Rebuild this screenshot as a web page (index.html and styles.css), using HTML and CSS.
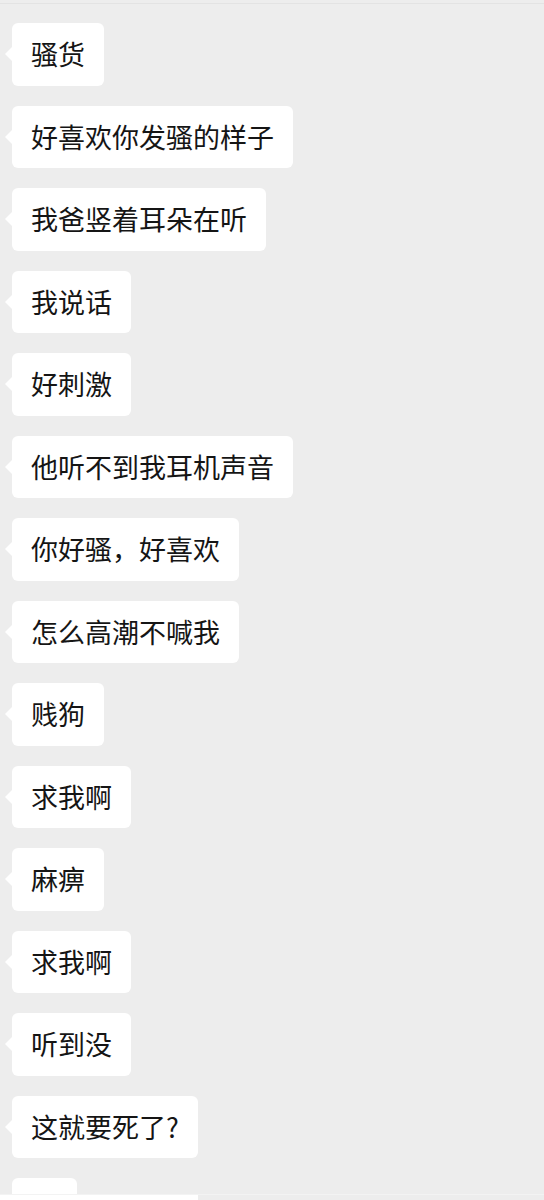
FILE: index.html
```html
<!DOCTYPE html>
<html>
<head>
  <meta charset="utf-8">
  <title>聊天记录</title>
  <link rel="stylesheet" href="styles.css">
</head>
<body>
  <div class="chat">
    <div class="msg">骚货</div>
    <div class="msg">好喜欢你发骚的样子</div>
    <div class="msg">我爸竖着耳朵在听</div>
    <div class="msg">我说话</div>
    <div class="msg">好刺激</div>
    <div class="msg">他听不到我耳机声音</div>
    <div class="msg">你好骚，好喜欢</div>
    <div class="msg">怎么高潮不喊我</div>
    <div class="msg">贱狗</div>
    <div class="msg">求我啊</div>
    <div class="msg">麻痹</div>
    <div class="msg">求我啊</div>
    <div class="msg">听到没</div>
    <div class="msg">这就要死了?</div>
    <div class="msg short"></div>
  </div>
  <!-- next screenshot glued under the first one -->
  <div class="next">
    <div class="next-bubble">这颗糊涂了么</div>
  </div>
</body>
</html>
```

FILE: styles.css
```css
body {
  margin: 0;
  background-color: #ededed;
  font-family: "Noto Sans CJK SC", "Noto Sans", sans-serif;
  height: 1200px;
  overflow: hidden;
}

.chat {
  border-top: 1px solid #e3e3e3;
  margin-top: 3px;
  padding: 19px 0 0 12px;
  display: flex;
  flex-direction: column;
  align-items: flex-start;
  gap: 20px;
  height: 1171px;
  overflow: hidden;
}

.msg {
  position: relative;
  flex-shrink: 0;
  background-color: #fff;
  color: #151515;
  font-size: 27px;
  line-height: 36.5px;
  padding: 13px 19px;
  border-radius: 6px;
}

/* little tail pointing at the avatar */
.msg::before {
  content: "";
  position: absolute;
  left: -7px;
  top: 24px;
  border-style: solid;
  border-width: 7px 7px 7px 0;
  border-color: transparent #fff transparent transparent;
}

.msg.short {
  width: 27px;
  height: 36.5px;
}

.next {
  border-top: 1px solid #f3f3f3;
  height: 6px;
  overflow: hidden;
}

.next-bubble {
  width: 158px;
  background-color: #fff;
  padding: 2px 0 0 40px;
  font-size: 27px;
  line-height: 36px;
  color: #151515;
  white-space: nowrap;
  overflow: hidden;
}
```
